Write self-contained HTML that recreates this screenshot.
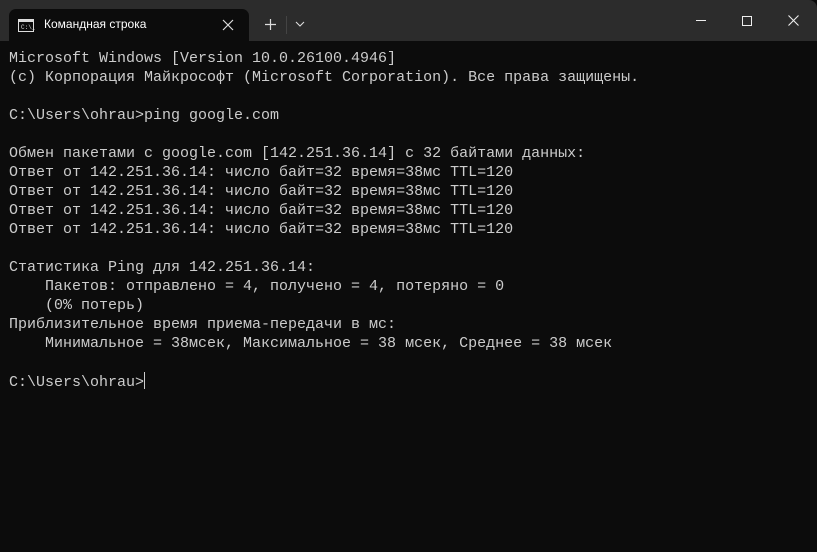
<!DOCTYPE html>
<html><head><meta charset="utf-8"><style>
body{margin:0;width:817px;height:552px;background:#0c0c0c;overflow:hidden;font-family:"Liberation Sans",sans-serif}
.bar{position:absolute;left:0;top:0;width:817px;height:41px;background:#2c2c2c;border-top-right-radius:8px}
.tab{position:absolute;left:9px;top:9px;width:240px;height:32px;background:#0c0c0c;border-radius:7px 7px 0 0}
.tt{position:absolute;left:44px;top:17px;color:#fff;font-size:12px}
pre{position:absolute;left:9px;top:49px;margin:0;font-family:"Liberation Mono","DejaVu Sans Mono",monospace;font-size:15px;line-height:19px;color:#cccccc}
.cur{display:inline-block;width:1px;height:17px;background:#ccc;vertical-align:-3px}
</style></head><body>
<div class="bar"></div>
<div class="tab"></div>
<svg style="position:absolute;left:18px;top:19px" width="17" height="13"><rect x="0.5" y="0.5" width="15" height="12" fill="none" stroke="#ddd"/><rect x="1" y="1" width="14" height="2" fill="#ddd"/><text x="3" y="10" font-size="6" fill="#ddd" font-family="Liberation Mono">C:\_</text></svg>
<div class="tt">Командная строка</div>
<svg style="position:absolute;left:222px;top:19px" width="12" height="12"><path d="M1 1L11 11M11 1L1 11" stroke="#ddd" stroke-width="1.2"/></svg>
<svg style="position:absolute;left:264px;top:18px" width="13" height="13"><path d="M6.5 1V12M1 6.5H12" stroke="#ddd" stroke-width="1.2"/></svg>
<div style="position:absolute;left:286px;top:16px;width:1px;height:18px;background:#444"></div>
<svg style="position:absolute;left:295px;top:21px" width="10" height="6"><path d="M1 1L5 5L9 1" stroke="#ddd" fill="none" stroke-width="1.1"/></svg>
<div style="position:absolute;left:696px;top:20px;width:10px;height:1px;background:#eee"></div>
<div style="position:absolute;left:742px;top:16px;width:8px;height:8px;border:1px solid #eee"></div>
<svg style="position:absolute;left:788px;top:15px" width="11" height="11"><path d="M0.5 0.5L10.5 10.5M10.5 0.5L0.5 10.5" stroke="#eee" stroke-width="1.1"/></svg>
<pre>Microsoft Windows [Version 10.0.26100.4946]
(c) Корпорация Майкрософт (Microsoft Corporation). Все права защищены.

C:\Users\ohrau&gt;ping google.com

Обмен пакетами с google.com [142.251.36.14] с 32 байтами данных:
Ответ от 142.251.36.14: число байт=32 время=38мс TTL=120
Ответ от 142.251.36.14: число байт=32 время=38мс TTL=120
Ответ от 142.251.36.14: число байт=32 время=38мс TTL=120
Ответ от 142.251.36.14: число байт=32 время=38мс TTL=120

Статистика Ping для 142.251.36.14:
    Пакетов: отправлено = 4, получено = 4, потеряно = 0
    (0% потерь)
Приблизительное время приема-передачи в мс:
    Минимальное = 38мсек, Максимальное = 38 мсек, Среднее = 38 мсек

C:\Users\ohrau&gt;<span class="cur"></span></pre>
</body></html>
